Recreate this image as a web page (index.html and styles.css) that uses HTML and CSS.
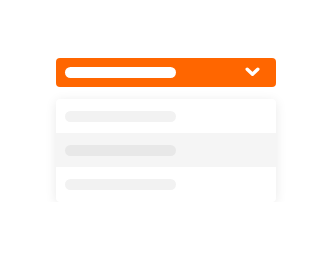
FILE: index.html
```html
<!DOCTYPE html>
<html>
<head>
<meta charset="utf-8">
<link rel="stylesheet" href="styles.css">
</head>
<body>
<div class="wrap">
  <div class="select">
    <span class="pill pill-white"></span>
    <svg class="chev" width="15" height="10" viewBox="0 0 15 10"><path d="M2.2 2.2 L7.5 7.3 L12.8 2.2" fill="none" stroke="#fff" stroke-width="3.4" stroke-linecap="round" stroke-linejoin="round"/></svg>
  </div>
  <div class="menu">
    <div class="row"><span class="pill"></span></div>
    <div class="row row-active"><span class="pill"></span></div>
    <div class="row"><span class="pill"></span></div>
  </div>
</div>
</body>
</html>
```
FILE: styles.css
```css
html, body { margin: 0; padding: 0; background: #fff; }
.wrap { width: 220px; padding: 58px 0 0 56px; display: flex; flex-direction: column; }
.select {
  height: 29px; background: #ff6600; border-radius: 4px;
  display: flex; align-items: center; justify-content: space-between;
  padding: 0 16px 0 9px;
}
.pill { display: block; width: 111px; height: 11px; border-radius: 6px; background: #f2f2f2; }
.pill-white { background: #fff; }
.chev { display: block; margin-top: -1px; }
.menu {
  margin-top: 12px; background: #fff; border-radius: 4px;
  box-shadow: 0 2px 12px rgba(0,0,0,0.09);
  overflow: hidden;
}
.row { height: 34px; display: flex; align-items: center; padding-left: 9px; }
.row:last-child { height: 35px; }
.row-active { background: #f5f5f5; }
.row-active .pill { background: #e8e8e8; }
```
